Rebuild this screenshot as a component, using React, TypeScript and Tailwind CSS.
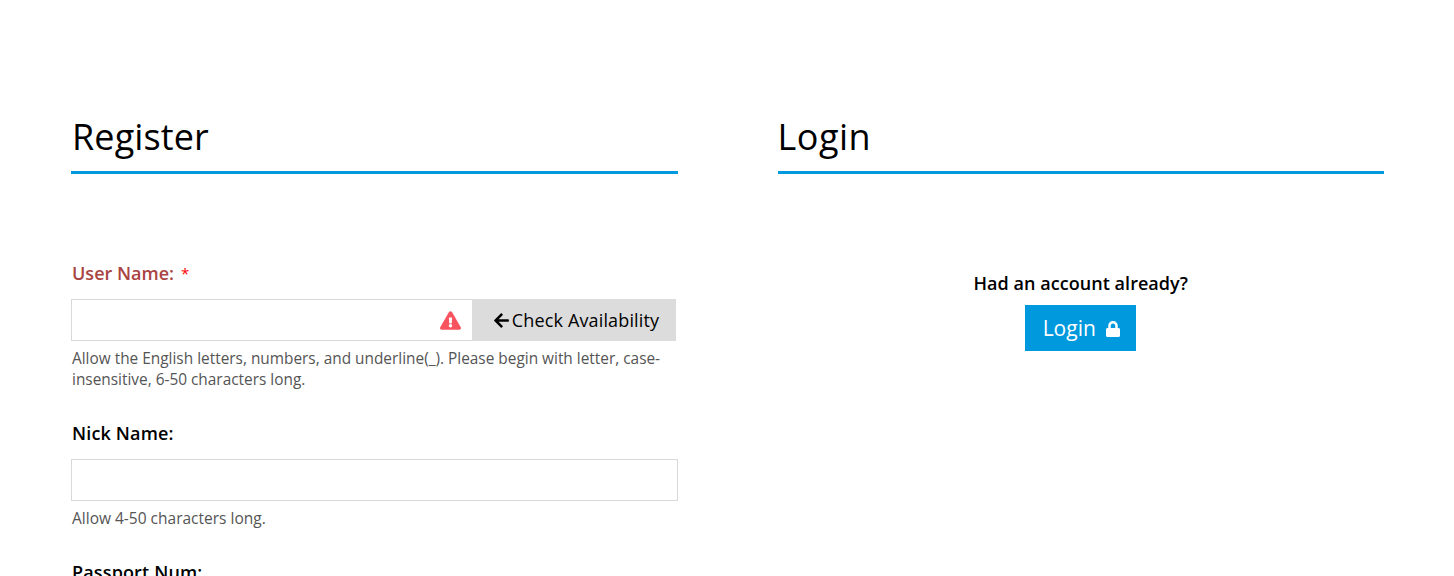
import React from "react";
import { FaArrowLeft, FaExclamationTriangle, FaLock } from "react-icons/fa";

export default function App() {
  return (
    <div className="h-[576px] overflow-hidden bg-white text-black font-['Open_Sans','Noto_Sans',sans-serif]">
      <div className="grid grid-cols-2 gap-x-[100px] pl-[71px] pr-[70px] pt-[112px]">
        <section>
          <h2 className="h-[62px] border-b-[3px] border-[#0099dd] text-[36px] leading-[50px] pl-px tracking-[0.1px]">Register</h2>
          <form className="pt-[87px]">
            <label className="flex h-[24px] items-center text-[18px] font-semibold text-[#a94442] pl-px">
              User Name:<span className="ml-[7px] text-[#f00] font-normal text-[15px]">*</span>
            </label>
            <div className="mt-[14px] flex h-[42px] w-[605px]">
              <div className="flex flex-1 items-center justify-end border border-[#d9d9d9] border-r-0 pr-[11px]">
                <FaExclamationTriangle className="text-[#f8545f] text-[21px]" />
              </div>
              <button type="button" className="flex w-[204px] items-center justify-center gap-[2px] bg-[#dcdcdc] pl-1 text-[18px] tracking-[0.15px]">
                <FaArrowLeft className="text-[17px]" />
                Check Availability
              </button>
            </div>
            <p className="mt-[7px] w-[600px] text-[15.4px] leading-[21px] text-[#555] pl-px">
              Allow the English letters, numbers, and underline(_). Please begin with letter, case-insensitive, 6-50 characters long.
            </p>
            <label className="mt-[31px] block h-[24px] text-[18px] leading-[24px] font-semibold pl-px tracking-[0.15px]">Nick Name:</label>
            <div className="mt-[14px] h-[42px] border border-[#d9d9d9]" />
            <p className="mt-[7px] text-[15.5px] leading-[21px] text-[#555] pl-px">Allow 4-50 characters long.</p>
            <label className="mt-[31px] block h-[24px] text-[18px] leading-[24px] font-semibold pl-px tracking-[0.15px]">Passport Num:</label>
          </form>
        </section>
        <section>
          <h2 className="h-[62px] border-b-[3px] border-[#0099dd] text-[36px] leading-[50px] tracking-[0.5px]">Login</h2>
          <div className="flex flex-col items-center pt-[97px]">
            <p className="h-[24px] text-[18px] leading-[24px] font-semibold tracking-[0.05px]">Had an account already?</p>
            <button type="button" className="mt-[10px] flex h-[46px] w-[111px] items-center justify-center gap-[9px] bg-[#0099dd] pl-[2px] pt-px text-[21px] text-white">
              Login <FaLock className="text-[16px]" />
            </button>
          </div>
        </section>
      </div>
    </div>
  );
}
